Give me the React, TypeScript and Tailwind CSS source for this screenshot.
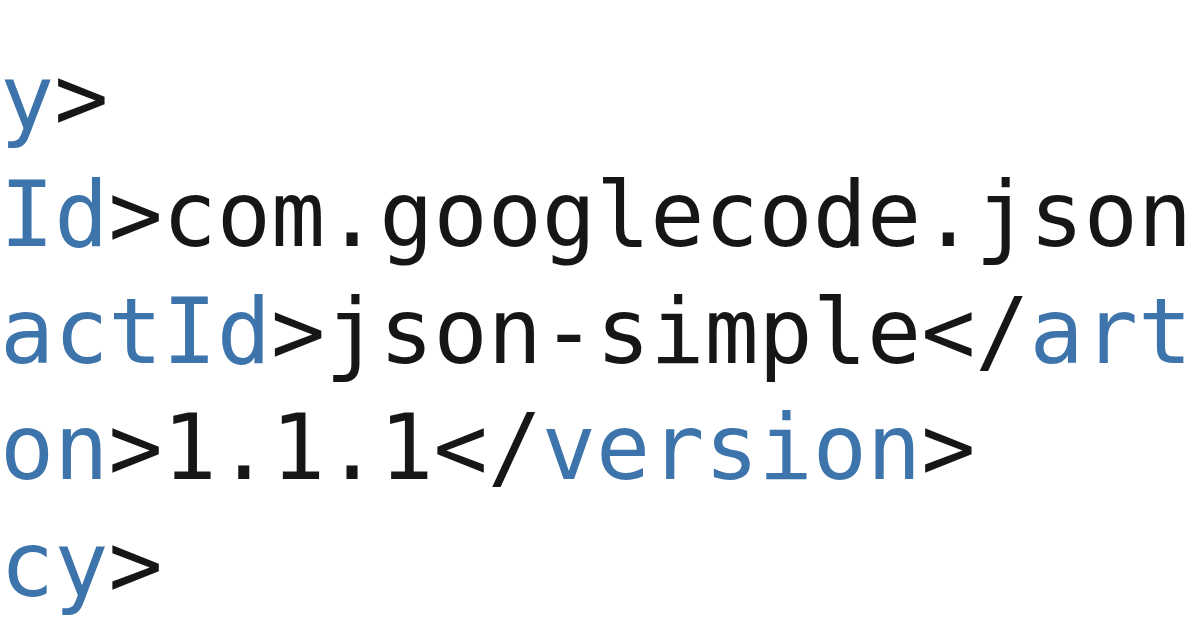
import React from "react";

type Part = { t: string; tag?: boolean };

const lines: Part[][] = [
  [{ t: "y", tag: true }, { t: ">" }],
  [{ t: "Id", tag: true }, { t: ">com.googlecode.json" }],
  [{ t: "actId", tag: true }, { t: ">json-simple</" }, { t: "art", tag: true }],
  [{ t: "on", tag: true }, { t: ">1.1.1</" }, { t: "version", tag: true }, { t: ">" }],
  [{ t: "cy", tag: true }, { t: ">" }],
];

const App = () => {
  return (
    <div className="w-[1200px] h-[628px] overflow-hidden bg-white pt-[40px]">
      <pre
        className="m-0 text-[90px] leading-[116.75px] text-[#161616] whitespace-pre"
        style={{ fontFamily: '"DejaVu Sans Mono", "Liberation Mono", monospace' }}
      >
        {lines.map((parts, i) => (
          <div key={i}>
            {parts.map((p, j) => (
              <span key={j} className={p.tag ? "text-[#3c74ab]" : ""}>
                {p.t}
              </span>
            ))}
          </div>
        ))}
      </pre>
    </div>
  );
};

export default App;
